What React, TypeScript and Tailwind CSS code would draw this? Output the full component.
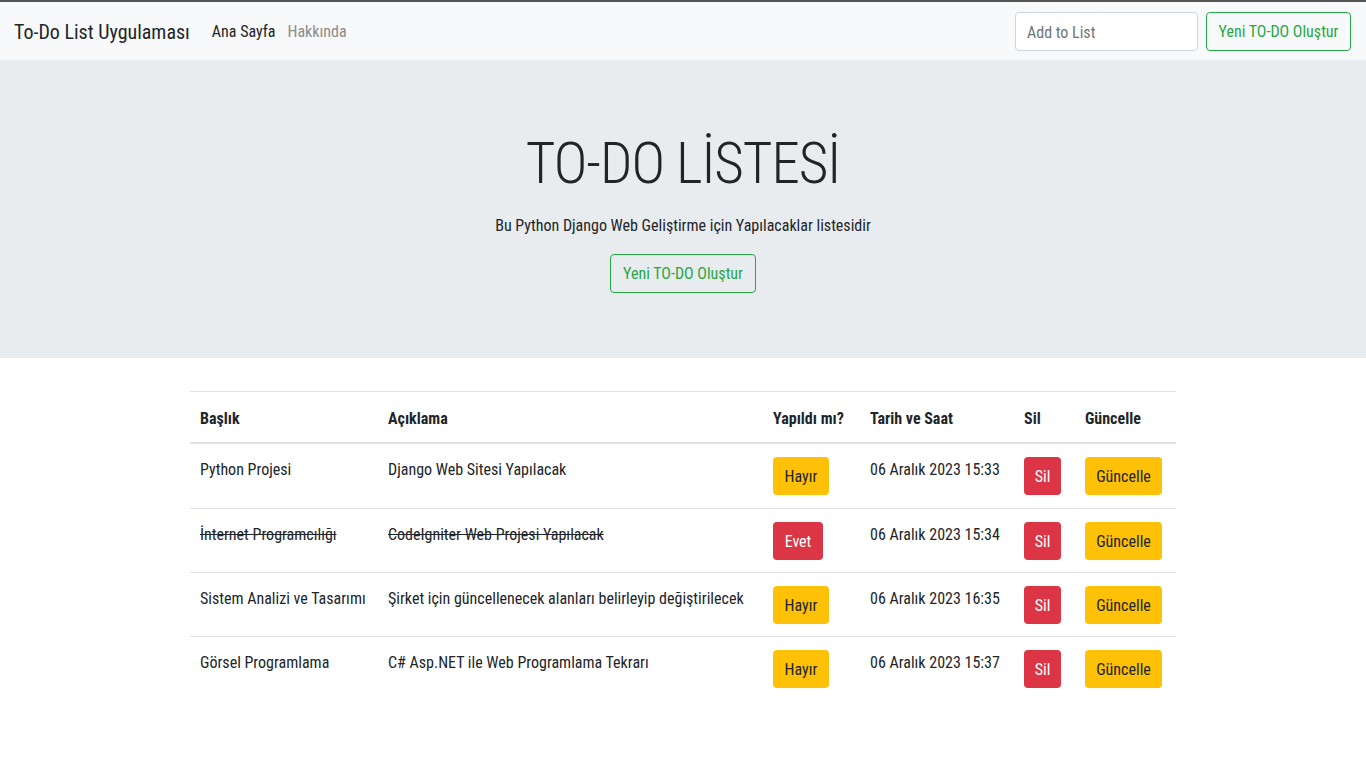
import React from "react";

const rows = [
  { t: "Python Projesi", d: "Django Web Sitesi Yapılacak", done: false, date: "06 Aralık 2023 15:33" },
  { t: "İnternet Programcılığı", d: "CodeIgniter Web Projesi Yapılacak", done: true, date: "06 Aralık 2023 15:34" },
  { t: "Sistem Analizi ve Tasarımı", d: "Şirket için güncellenecek alanları belirleyip değiştirilecek", done: false, date: "06 Aralık 2023 16:35" },
  { t: "Görsel Programlama", d: "C# Asp.NET ile Web Programlama Tekrarı", done: false, date: "06 Aralık 2023 15:37" },
];

const COLS = "grid grid-cols-[188px_385px_97px_154px_61px_101px]";

export default function App() {
  return (
    <div className="min-h-[774px] bg-white text-[#212529] font-['Roboto_Condensed','Roboto',sans-serif] text-[16px]">
      <div className="h-[2px] bg-[#555]" />
      <nav className="flex h-[58px] items-center bg-[#f8f9fa] pl-[14px] pr-[15px]">
        <span className="pt-[2px] text-[20px]">To-Do List Uygulaması</span>
        <span className="ml-[22px] pt-[2px]">Ana Sayfa</span>
        <span className="ml-[12px] pt-[2px] text-[#8c8c8c]">Hakkında</span>
        <div className="ml-auto flex gap-[8px]">
          <input
            placeholder="Add to List"
            className="h-[39px] w-[183px] rounded-[4px] border border-[#ced4da] bg-white px-[11px] pt-[2px] outline-none placeholder:text-[#6c757d]"
          />
          <button className="h-[39px] w-[145px] rounded-[4px] border border-[#28a745] pt-[1px] text-[#28a745]">Yeni TO-DO Oluştur</button>
        </div>
      </nav>
      <section className="flex h-[298px] flex-col items-center bg-[#e9ecef] pt-[68px]">
        <h1 className="text-[57px] font-light leading-[72px] tracking-[-1px]">TO-DO LİSTESİ</h1>
        <p className="mt-[14px] leading-[24px]">Bu Python Django Web Geliştirme için Yapılacaklar listesidir</p>
        <button className="mt-[16px] h-[39px] w-[146px] rounded-[4px] border border-[#28a745] pt-[1px] text-[#28a745]">Yeni TO-DO Oluştur</button>
      </section>
      <div className="mx-auto mt-[33px] w-[986px]">
        <div className={`${COLS} border-t border-b-2 border-[#dee2e6] font-bold`}>
          {["Başlık", "Açıklama", "Yapıldı mı?", "Tarih ve Saat", "Sil", "Güncelle"].map((h) => (
            <div key={h} className="px-[10px] pt-[15px] pb-[11px] leading-[24px]">{h}</div>
          ))}
        </div>
        {rows.map((r, i) => (
          <div key={i} className={`${COLS} h-[64px] ${i > 0 ? "border-t border-[#dee2e6]" : ""}`}>
            <div className={`px-[10px] pt-[14px] leading-[24px] ${r.done ? "line-through" : ""}`}>{r.t}</div>
            <div className={`px-[10px] pt-[14px] leading-[24px] ${r.done ? "line-through" : ""}`}>{r.d}</div>
            <div className="px-[10px] pt-[13px]">
              {r.done ? (
                <button className="h-[38px] w-[50px] rounded-[4px] bg-[#dc3545] pt-[1px] text-white">Evet</button>
              ) : (
                <button className="h-[38px] w-[56px] rounded-[4px] bg-[#ffc107] pt-[1px] text-[#212529]">Hayır</button>
              )}
            </div>
            <div className="px-[10px] pt-[14px] leading-[24px]">{r.date}</div>
            <div className="px-[10px] pt-[13px]">
              <button className="h-[38px] w-[37px] rounded-[4px] bg-[#dc3545] pt-[1px] text-white">Sil</button>
            </div>
            <div className="px-[10px] pt-[13px]">
              <button className="h-[38px] w-[77px] rounded-[4px] bg-[#ffc107] pt-[1px] text-[#212529]">Güncelle</button>
            </div>
          </div>
        ))}
      </div>
    </div>
  );
}
